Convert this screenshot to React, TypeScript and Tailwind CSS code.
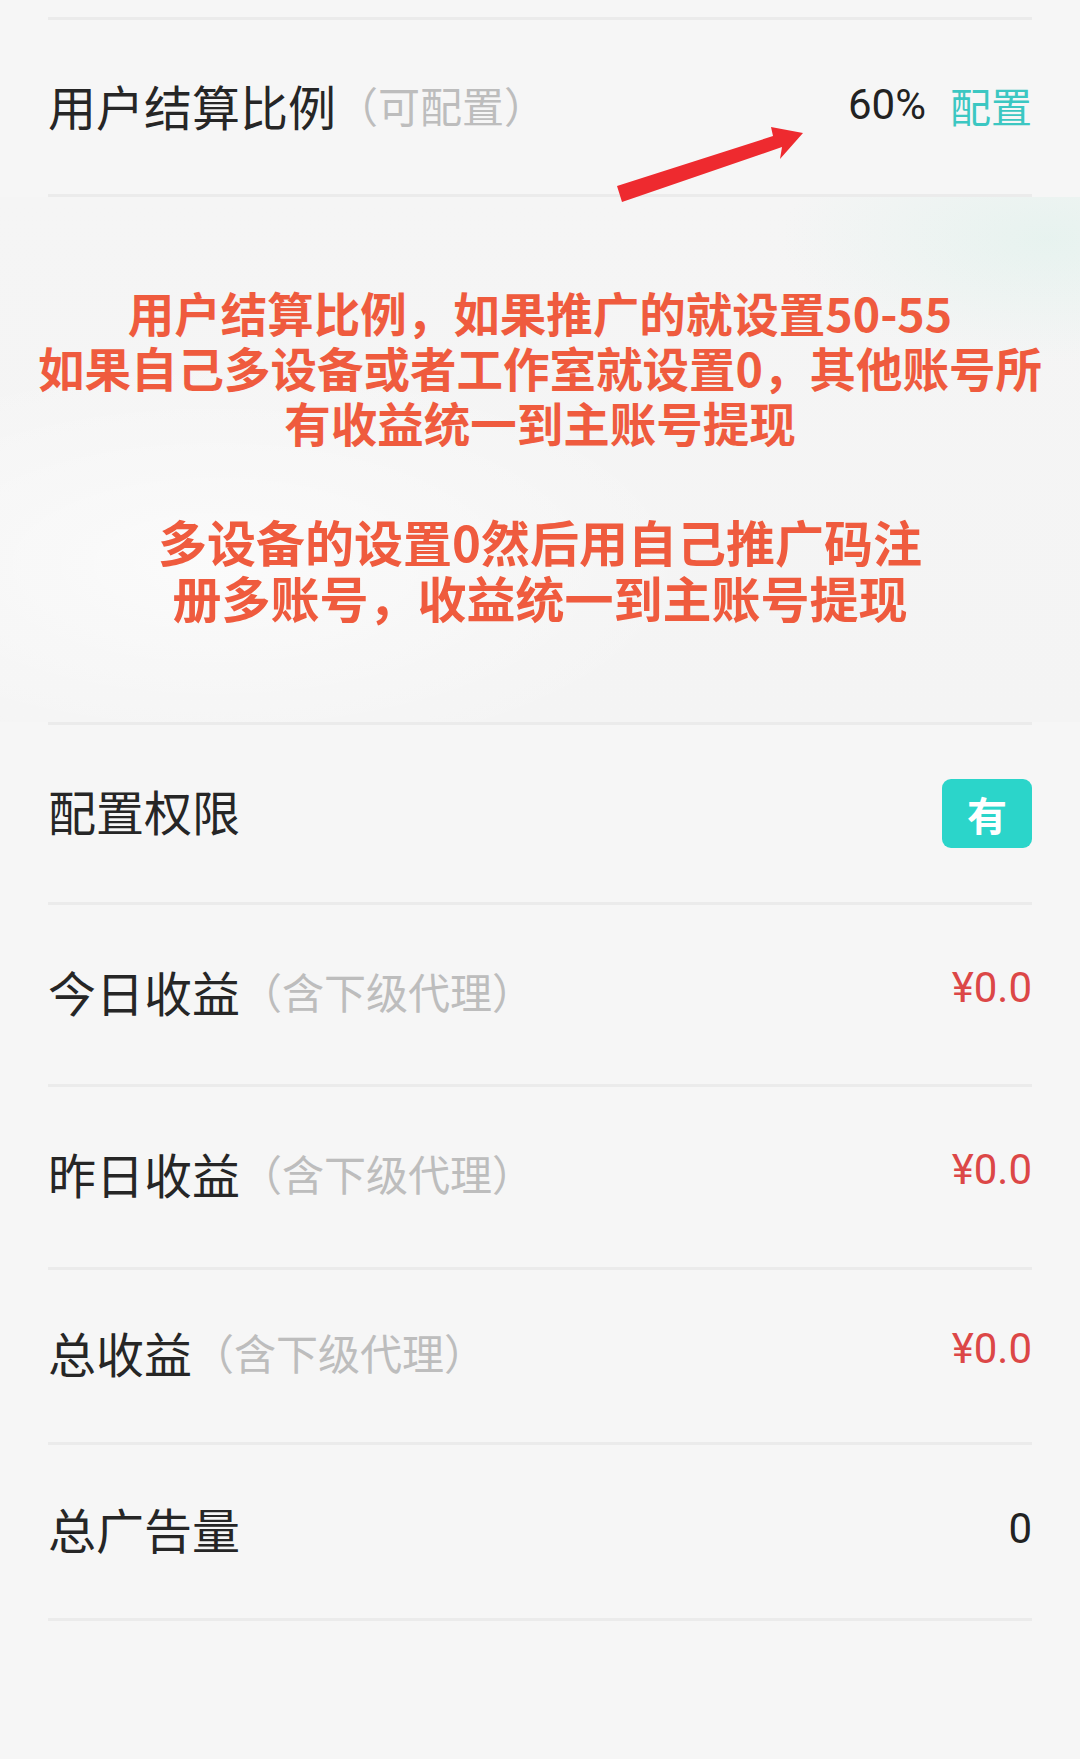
import type { ReactNode } from 'react'

const cjk = "font-['Noto_Sans_CJK_SC','Noto_Sans',sans-serif]"
const num = "font-['Roboto','Noto_Sans_CJK_SC',sans-serif]"

function Divider() {
  return <div className="mx-[48px] h-[3px] bg-[#ebebeb]" />
}

function Row({
  label,
  hint,
  height,
  lift = 'mb-[8px]',
  children,
}: {
  label: string
  hint?: string
  height: string
  lift?: string
  children: ReactNode
}) {
  return (
    <div className={`mx-[48px] flex items-center justify-between ${height}`}>
      <div className={`flex items-center ${lift} ${cjk}`}>
        <span className="text-[48px] leading-none text-[#262626]">{label}</span>
        {hint && <span className="text-[42px] leading-none text-[#bdbdbd]">（{hint}）</span>}
      </div>
      <div className="flex items-center">{children}</div>
    </div>
  )
}

function Money() {
  return <span className={`${num} mb-[14px] text-[42px] leading-none text-[#dc4747]`}>¥0.0</span>
}

export default function App() {
  return (
    <div className="relative min-h-[1759px] w-[1080px] bg-[#f6f6f6]">
      <div className="h-[17px]" />
      <Divider />

      <Row label="用户结算比例" hint="可配置" height="h-[174px]" lift="mb-[4px]">
        <span className={`${num} mb-[4px] text-[42px] leading-none text-[#222222]`}>60%</span>
        <span className={`${cjk} mb-[4px] ml-6 text-[41px] leading-none text-[#3cc7c2]`}>配置</span>
      </Row>
      <Divider />

      {/* pasted note over a faded screenshot */}
      <div className="flex h-[525px] flex-col items-center bg-[radial-gradient(ellipse_at_97%_8%,rgba(205,238,228,0.35),transparent_18%),radial-gradient(ellipse_at_20%_70%,rgba(255,255,255,0.6),transparent_40%),linear-gradient(180deg,#f5f5f5,#f4f4f4)] pt-[87px]">
        <div className={`${cjk} text-center font-bold text-[#ef5b3e]`}>
          <p className="whitespace-nowrap text-[46.5px] leading-[55px]">用户结算比例，如果推广的就设置50-55</p>
          <p className="whitespace-nowrap text-[46.5px] leading-[55px]">如果自己多设备或者工作室就设置0，其他账号所</p>
          <p className="whitespace-nowrap text-[46.5px] leading-[55px]">有收益统一到主账号提现</p>
          <p className="mt-[64px] whitespace-nowrap text-[49px] leading-[56px]">多设备的设置0然后用自己推广码注</p>
          <p className="whitespace-nowrap text-[49px] leading-[56px]">册多账号，收益统一到主账号提现</p>
        </div>
      </div>
      <Divider />

      <Row label="配置权限" height="h-[177px]">
        <span className={`${cjk} flex h-[69px] w-[90px] items-center justify-center rounded-[9px] bg-[#2bd5ca] text-[40px] font-bold leading-none text-white`}>
          有
        </span>
      </Row>
      <Divider />

      <Row label="今日收益" hint="含下级代理" height="h-[179px]">
        <Money />
      </Row>
      <Divider />

      <Row label="昨日收益" hint="含下级代理" height="h-[180px]">
        <Money />
      </Row>
      <Divider />

      <Row label="总收益" hint="含下级代理" height="h-[172px]">
        <Money />
      </Row>
      <Divider />

      <Row label="总广告量" height="h-[173px]">
        <span className={`${num} mb-[6px] text-[42px] leading-none text-[#222222]`}>0</span>
      </Row>
      <Divider />

      {/* red annotation arrow */}
      <svg className="pointer-events-none absolute left-0 top-0" width="1080" height="260" viewBox="0 0 1080 260">
        <polygon points="617,186 773,136 771,127 803,133 780,159 782,147 622,202" fill="#ee2a2f" />
      </svg>
    </div>
  )
}
